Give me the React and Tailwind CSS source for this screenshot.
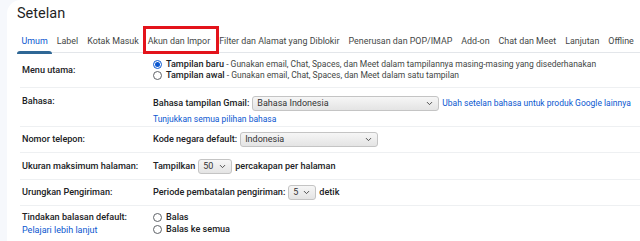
import { ChevronDown } from 'lucide-react';

const tabs = [
  'Umum',
  'Label',
  'Kotak Masuk',
  'Akun dan Impor',
  'Filter dan Alamat yang Diblokir',
  'Penerusan dan POP/IMAP',
  'Add-on',
  'Chat dan Meet',
  'Lanjutan',
  'Offline',
];

function Radio({ checked }) {
  return (
    <span
      className={`w-[9px] h-[9px] rounded-full border flex items-center justify-center shrink-0 ${
        checked ? 'border-[#0b57d0]' : 'border-[#5f6368]'
      }`}
    >
      {checked && <span className="w-[5px] h-[5px] rounded-full bg-[#0b57d0]" />}
    </span>
  );
}

function Select({ value, width }) {
  return (
    <span
      className={`${width} h-[15px] border border-[#c4c4c4] rounded-[3px] bg-gradient-to-b from-[#f6f6f6] to-[#e4e4e4] flex items-center justify-between pl-[4px] pr-[4px] text-[9px] text-[#333] font-normal`}
    >
      <span>{value}</span>
      <ChevronDown size={9} strokeWidth={2.5} className="text-[#444]" />
    </span>
  );
}

function Row({ label, sub, height, children, align = 'items-center', last }) {
  return (
    <div className={`flex ${align} ${height} ${last ? '' : 'border-b border-[#eef0f2]'}`}>
      <div className="w-[133px] shrink-0 pl-[2px] whitespace-nowrap">
        <div className="font-medium text-[#202124]">{label}</div>
        {sub && <div className="text-[#0b57d0] text-[9px] font-normal mt-[2px]">{sub}</div>}
      </div>
      <div className="flex-1">{children}</div>
    </div>
  );
}

export default function App() {
  return (
    <div
      className="w-[640px] h-[241px] bg-[#f6f8fc] flex overflow-hidden text-[9.1px] leading-[11px]"
      style={{ fontFamily: 'Roboto, "Open Sans", sans-serif' }}
    >
      <div className="w-[7px] shrink-0" />
      <div className="flex-1 bg-white rounded-tl-[14px] pl-[10px] flex flex-col">
        <div className="h-[30px] pt-[4px] text-[14.5px] leading-[20px] text-[#1f1f1f]">Setelan</div>

        <div className="flex h-[23px] border-b border-[#e3e6ea] text-[8.9px] text-[#444746] whitespace-nowrap">
          {tabs.map((t, i) => (
            <div key={t} className="relative h-[22px] px-[4.5px] flex items-center">
              <span className={i === 0 ? 'text-[#0b57d0]' : ''}>{t}</span>
              {i === 0 && (
                <span className="absolute left-0 right-0 bottom-[-2px] h-[3px] rounded-t-[3px] bg-[#2f6795]" />
              )}
              {i === 3 && (
                <span className="absolute left-0 right-[-4px] top-[-4px] bottom-[-2px] border-[3px] border-[#e3131b]" />
              )}
            </div>
          ))}
        </div>

        <div className="ml-[3px] flex flex-col">
          <Row label="Menu utama:" height="h-[35px]">
            <div className="flex flex-col">
              <div className="flex items-center gap-[4px] h-[11px]">
                <Radio checked />
                <span className="whitespace-nowrap text-[#444746] text-[8.5px]">
                  <b className="font-medium text-[#202124] text-[9.1px]">Tampilan baru</b> - Gunakan email, Chat, Spaces, dan Meet dalam tampilannya masing-masing yang disederhanakan
                </span>
              </div>
              <div className="flex items-center gap-[4px] h-[11px]">
                <Radio />
                <span className="whitespace-nowrap text-[#444746] text-[8.5px]">
                  <b className="font-medium text-[#202124] text-[9.1px]">Tampilan awal</b> - Gunakan email, Chat, Spaces, dan Meet dalam satu tampilan
                </span>
              </div>
            </div>
          </Row>

          <Row label="Bahasa:" height="h-[39px]" align="items-start pt-[8px]">
            <div className="flex flex-col gap-[3px]">
              <div className="flex items-center gap-[3px] h-[15px] whitespace-nowrap">
                <span className="font-medium text-[#202124]">Bahasa tampilan Gmail:</span>
                <Select value="Bahasa Indonesia" width="w-[187px]" />
                <span className="text-[#0b57d0] text-[8.5px]">Ubah setelan bahasa untuk produk Google lainnya</span>
              </div>
              <div className="text-[#0b57d0] text-[8.5px]">Tunjukkan semua pilihan bahasa</div>
            </div>
          </Row>

          <Row label="Nomor telepon:" height="h-[26px]">
            <div className="flex items-center gap-[3px] whitespace-nowrap">
              <span className="font-medium text-[#202124]">Kode negara default:</span>
              <Select value="Indonesia" width="w-[138px]" />
            </div>
          </Row>

          <Row label="Ukuran maksimum halaman:" height="h-[27px]">
            <div className="flex items-center gap-[3px] whitespace-nowrap font-medium text-[#202124]">
              <span>Tampilkan</span>
              <Select value="50" width="w-[34px]" />
              <span>percakapan per halaman</span>
            </div>
          </Row>

          <Row label="Urungkan Pengiriman:" height="h-[26px]">
            <div className="flex items-center gap-[3px] whitespace-nowrap font-medium text-[#202124]">
              <span>Periode pembatalan pengiriman:</span>
              <Select value="5" width="w-[28px]" />
              <span>detik</span>
            </div>
          </Row>

          <Row label="Tindakan balasan default:" sub="Pelajari lebih lanjut" height="h-[35px]" align="items-start pt-[6px]" last>
            <div className="flex flex-col gap-[1px]">
              <div className="flex items-center gap-[4px] h-[11px]">
                <Radio />
                <span className="font-medium text-[#202124]">Balas</span>
              </div>
              <div className="flex items-center gap-[4px] h-[11px]">
                <Radio />
                <span className="font-medium text-[#202124]">Balas ke semua</span>
              </div>
            </div>
          </Row>
        </div>
      </div>
    </div>
  );
}
